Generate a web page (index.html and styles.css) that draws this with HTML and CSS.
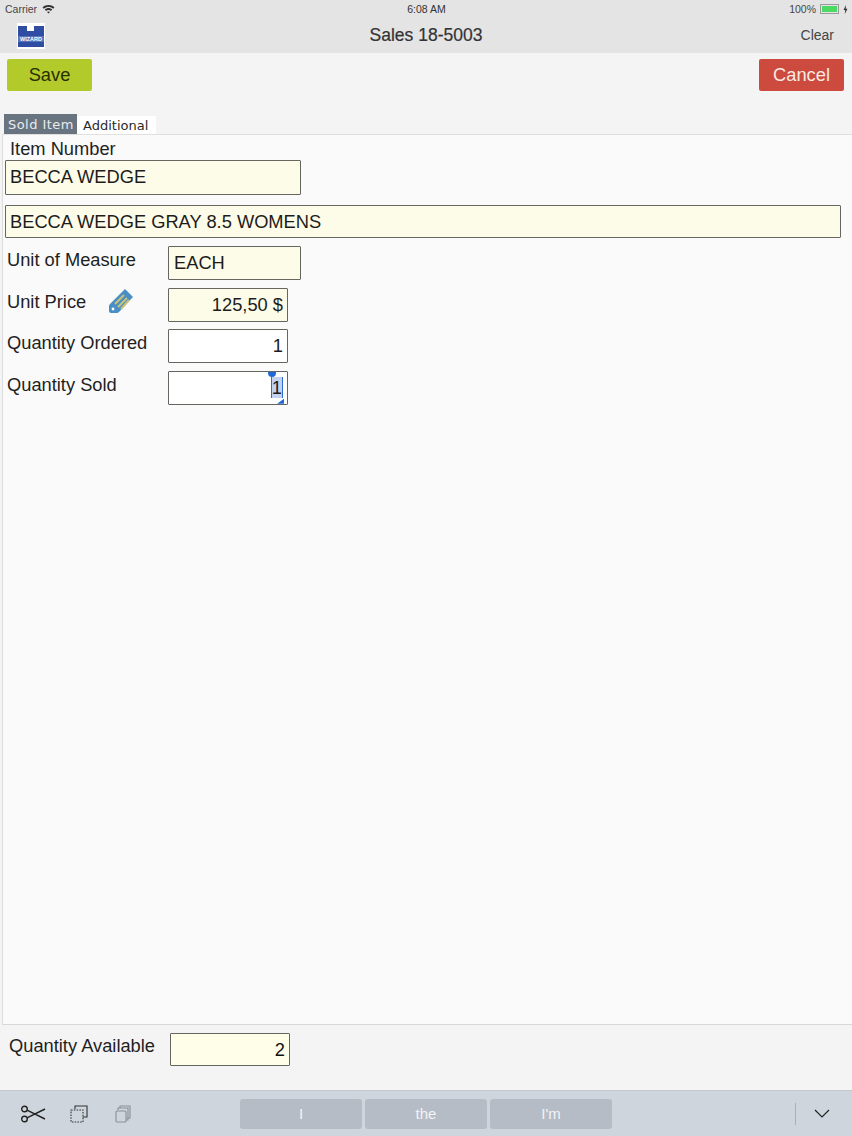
FILE: index.html
```html
<!DOCTYPE html>
<html lang="en">
  <head>
    <meta charset="UTF-8" />
    <title>Sales 18-5003</title>
    <link rel="stylesheet" href="styles.css">
  </head>
  <body>
    <div class="top">
      <div class="status">
        <div class="status-left">
          <span>Carrier</span>
          <svg width="13" height="10" viewBox="0 0 13 10">
            <path d="M0.5 3.4C3.8 0.2 9.2 0.2 12.5 3.4L11.2 4.8C8.6 2.4 4.4 2.4 1.8 4.8Z" fill="#333" />
            <path d="M2.8 5.6C5 3.6 8 3.6 10.2 5.6L8.9 6.9C7.4 5.7 5.6 5.7 4.1 6.9Z" fill="#333" />
            <path d="M5 7.9C5.9 7.2 7.1 7.2 8 7.9L6.5 9.5Z" fill="#333" />
          </svg>
        </div>
        <span class="clock">6:08 AM</span>
        <div class="status-right">
          <span>100%</span>
          <span class="battery"><span class="battery-fill"></span></span>
          <svg width="5" height="9" viewBox="0 0 5 9"><path d="M3 0L0.5 5H2.2L1.8 9L4.5 3.8H2.7Z" fill="#333" /></svg>
        </div>
      </div>
      <div class="nav">
        <div class="logo">
          <svg width="28" height="26" viewBox="0 0 28 26">
            <rect width="28" height="26" fill="#fff" />
            <path d="M1 3H10V8H17V3H27V24H1Z" fill="#2f4da3" />
            <rect x="1" y="13" width="26" height="6" fill="#5a72b8" />
            <text x="14" y="18.2" class="logo-text">WIZARD</text>
          </svg>
        </div>
        <div class="nav-title">Sales 18-5003</div>
        <div class="nav-clear">Clear</div>
      </div>
    </div>

    <div class="actions">
      <button class="btn btn-save">Save</button>
      <button class="btn btn-cancel">Cancel</button>
    </div>

    <div class="tabs">
      <div class="tab tab-active">Sold Item</div>
      <div class="tab">Additional</div>
    </div>

    <div class="panel">
      <div class="label label-item">Item Number</div>
      <div class="field field-item fill">BECCA WEDGE</div>
      <div class="field field-desc fill">BECCA WEDGE GRAY 8.5 WOMENS</div>

      <div class="row">
        <div class="label row-label">Unit of Measure</div>
        <div class="field field-uom fill">EACH</div>
      </div>
      <div class="row">
        <div class="label row-label label-price">
          Unit Price
          <svg width="26" height="26" viewBox="0 0 26 26">
            <path d="M17 1L25 9L11 24C10 25 9 25 8 25L3 25C2 25 1 24 1 23L1 18C1 17 2 16 3 15Z" fill="#4a8fc4" />
            <path d="M7 16L16 7M10 19L19 10M13 21L21 12" stroke="#c9c27a" stroke-width="2" fill="none" />
            <circle cx="5" cy="21" r="1.4" fill="#fff" />
          </svg>
        </div>
        <div class="field field-num fill">125,50 $</div>
      </div>
      <div class="row">
        <div class="label row-label">Quantity Ordered</div>
        <div class="field field-num">1</div>
      </div>
      <div class="row">
        <div class="label row-label">Quantity Sold</div>
        <div class="field field-num">
          <span class="selected">1<i class="handle handle-top"></i><i class="handle handle-bottom"></i></span>
        </div>
      </div>
    </div>

    <div class="bottom">
      <div class="label bottom-label">Quantity Available</div>
      <div class="field field-avail fill-light">2</div>
    </div>

    <div class="keybar">
      <div class="key-tools">
        <svg width="26" height="18" viewBox="0 0 26 18" fill="none" stroke="#222" stroke-width="1.4">
          <circle cx="4.5" cy="4" r="2.8" />
          <circle cx="4.5" cy="14" r="2.8" />
          <path d="M7 5.2L25 14M7 12.8L25 4" />
        </svg>
        <svg width="18" height="18" viewBox="0 0 18 18" fill="none" stroke="#333" stroke-width="1.1">
          <path d="M5 4V1H17V12H13" />
          <rect x="1" y="5" width="12" height="12" stroke-dasharray="1.6 1.2" />
        </svg>
        <svg class="paste" width="16" height="18" viewBox="0 0 16 18" fill="none" stroke="#8b9096" stroke-width="1.1">
          <path d="M5 3V1H15V13H12" />
          <path d="M3 5V3H13V15H11" />
          <rect x="1" y="6" width="10" height="11" rx="1" />
        </svg>
      </div>
      <div class="suggestions">
        <div class="suggestion">I</div>
        <div class="suggestion">the</div>
        <div class="suggestion">I'm</div>
      </div>
      <div class="key-right">
        <svg width="16" height="9" viewBox="0 0 16 9" fill="none" stroke="#222" stroke-width="1.2"><path d="M1 1L8 8L15 1" /></svg>
      </div>
    </div>
  </body>
</html>
```

FILE: styles.css
```css
html,
body {
  margin: 0;
  height: 1136px;
  overflow: hidden;
}
body {
  font-family: "Liberation Sans", Arial, sans-serif;
  background: #f5f4f5;
  color: #1c1c1c;
  display: flex;
  flex-direction: column;
}

/* status bar and nav */
.top {
  height: 53px;
  background: #e4e4e5;
  flex: none;
}
.status {
  height: 18px;
  display: flex;
  justify-content: space-between;
  align-items: center;
  padding: 0 4px 0 5px;
  font-size: 10.5px;
  color: #444;
  position: relative;
}
.status-left,
.status-right {
  display: flex;
  align-items: center;
  gap: 5px;
}
.status-right {
  gap: 4px;
}
.clock {
  position: absolute;
  left: 1px;
  right: 0;
  text-align: center;
  color: #333;
}
.battery {
  width: 15px;
  height: 6px;
  border: 1px solid #9a9a9a;
  padding: 1px;
  display: block;
}
.battery-fill {
  display: block;
  height: 100%;
  background: #4cd964;
}
.nav {
  height: 35px;
  display: flex;
  align-items: center;
  justify-content: space-between;
  position: relative;
  padding: 0 18px 0 17px;
}
.logo {
  width: 28px;
  height: 26px;
}
.logo-text {
  font-size: 5.5px;
  font-weight: 700;
  fill: #fff;
  text-anchor: middle;
}
.nav-title {
  position: absolute;
  left: 0;
  right: 0;
  text-align: center;
  font-size: 17.5px;
  color: #333;
  -webkit-text-stroke: 0.2px #333;
}
.nav-clear {
  font-size: 14px;
  color: #444;
  margin-bottom: 2px;
}

/* save / cancel */
.actions {
  flex: none;
  height: 61px;
  padding: 6px 8px 0 7px;
  box-sizing: border-box;
  display: flex;
  justify-content: space-between;
  align-items: flex-start;
}
.btn {
  width: 85px;
  height: 32px;
  border: none;
  border-radius: 2px;
  font-family: inherit;
  font-size: 18.3px;
  padding: 0;
}
.btn-save {
  background: #b3ca2b;
  color: #263000;
}
.btn-cancel {
  background: #cc4b3e;
  color: #fbe9e4;
}

/* tabs */
.tabs {
  flex: none;
  height: 20px;
  display: flex;
  padding-left: 4px;
  font-family: "DejaVu Sans", sans-serif;
  font-size: 13px;
}
.tab {
  background: #fff;
  color: #2a2a2a;
  width: 79px;
  padding: 2px 0 0 6px;
  box-sizing: border-box;
  height: 18px;
  margin-top: 2px;
}
.tab-active {
  background: #68747f;
  color: #e8ebee;
  width: 73px;
  padding: 3px 0 0 4px;
  margin-top: 0;
  height: 20px;
  letter-spacing: 0.45px;
}

/* main panel */
.panel {
  flex: none;
  height: 891px;
  box-sizing: border-box;
  margin-left: 2px;
  border-top: 1px solid #e0e0e0;
  border-left: 1px solid #dcdcdc;
  border-bottom: 1px solid #d8d8d8;
  background: #fafafa;
  padding-top: 2px;
}
.label {
  font-size: 18.3px;
  color: #1f1f1f;
}
.label-item {
  padding-left: 7px;
  height: 22px;
  line-height: 23px;
}
.field {
  box-sizing: border-box;
  border: 1px solid #666660;
  border-radius: 1px;
  background: #fff;
  font-size: 18.3px;
  line-height: 31px;
  height: 34px;
  padding: 0 4px;
}
.fill {
  background: #fcfce8;
}
.fill-light {
  background: #ffffe9;
}
.field-item {
  width: 296px;
  height: 35px;
  margin: 1px 0 0 2px;
}
.field-desc {
  width: 836px;
  height: 33px;
  margin: 10px 0 8px 2px;
}
.row {
  display: flex;
  height: 41.6px;
  align-items: flex-start;
}
.row-label {
  width: 165px;
  padding-left: 4px;
  box-sizing: border-box;
  line-height: 28px;
}
.label-price {
  display: flex;
  align-items: flex-start;
  gap: 22px;
}
.field-uom {
  width: 133px;
  padding-left: 5px;
}
.field-num {
  width: 120px;
  text-align: right;
}
.selected {
  background: #c3d3ef;
  position: relative;
  display: inline-block;
  line-height: 21px;
  border-left: 1px solid #2f6fd0;
  border-right: 1px solid #2f6fd0;
}
.handle {
  position: absolute;
  background: #1f68d6;
}
.handle-top {
  width: 8px;
  height: 5px;
  border-radius: 0 0 4px 4px;
  top: -5px;
  left: -4px;
}
.handle-bottom {
  width: 7px;
  height: 5px;
  right: -2px;
  bottom: -6px;
  clip-path: polygon(100% 0, 100% 100%, 0 100%);
}

/* quantity available */
.bottom {
  flex: 1;
  display: flex;
  align-items: flex-start;
  padding: 8px 0 0 9px;
}
.bottom-label {
  width: 161px;
  line-height: 26px;
}
.field-avail {
  width: 120px;
  height: 33px;
  text-align: right;
  color: #111;
}

/* keyboard shortcut bar */
.keybar {
  flex: none;
  height: 46px;
  background: #cfd5dc;
  border-top: 1px solid #c6c9cc;
  box-sizing: border-box;
  position: relative;
  display: flex;
  align-items: center;
}
.key-tools {
  display: flex;
  align-items: center;
  gap: 24px;
  padding-left: 20px;
  width: 240px;
  box-sizing: border-box;
}
.paste {
  margin-left: 3px;
}
.suggestions {
  display: flex;
  gap: 3px;
}
.suggestion {
  width: 122px;
  height: 30px;
  background: #b6bcc5;
  border-radius: 3px;
  color: #f2f3f5;
  font-size: 15px;
  line-height: 30px;
  text-align: center;
}
.key-right {
  margin-left: auto;
  width: 57px;
  height: 22px;
  box-sizing: border-box;
  border-left: 1px solid #aab0b8;
  display: flex;
  align-items: center;
  justify-content: flex-end;
  padding-right: 22px;
}
```
